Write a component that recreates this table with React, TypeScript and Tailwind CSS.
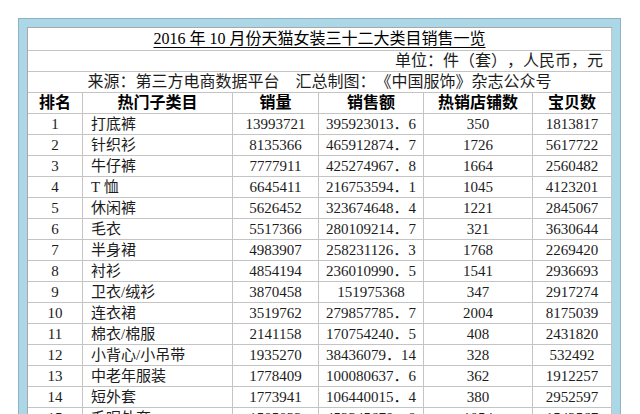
const rows: [string, string, string, string, string, string][] = [
  ["1", "打底裤", "13993721", "395923013．6", "350", "1813817"],
  ["2", "针织衫", "8135366", "465912874．7", "1726", "5617722"],
  ["3", "牛仔裤", "7777911", "425274967．8", "1664", "2560482"],
  ["4", "T 恤", "6645411", "216753594．1", "1045", "4123201"],
  ["5", "休闲裤", "5626452", "323674648．4", "1221", "2845067"],
  ["6", "毛衣", "5517366", "280109214．7", "321", "3630644"],
  ["7", "半身裙", "4983907", "258231126．3", "1768", "2269420"],
  ["8", "衬衫", "4854194", "236010990．5", "1541", "2936693"],
  ["9", "卫衣/绒衫", "3870458", "151975368", "347", "2917274"],
  ["10", "连衣裙", "3519762", "279857785．7", "2004", "8175039"],
  ["11", "棉衣/棉服", "2141158", "170754240．5", "408", "2431820"],
  ["12", "小背心/小吊带", "1935270", "38436079．14", "328", "532492"],
  ["13", "中老年服装", "1778409", "100080637．6", "362", "1912257"],
  ["14", "短外套", "1773941", "106440015．4", "380", "2952597"],
  ["15", "毛呢外套", "1585032", "452345678．9", "1054", "1542567"],
];

const headers = ["排名", "热门子类目", "销量", "销售额", "热销店铺数", "宝贝数"];

const cell = "flex items-center border-r border-b border-[#c4c4c4] leading-none";

export default function App() {
  return (
    <div className="w-[640px] h-[414px] overflow-hidden bg-white pt-[18px] pl-[18px] font-['Liberation_Serif','Noto_Sans_CJK_SC',serif] text-[#1c1c1c] [text-spacing-trim:space-all]">
      {/* window frame */}
      <div className="w-[603px] h-[420px] border-l border-t border-r border-[#8cb3c4] bg-[#acd7e7] pt-[8px] px-[8px]">
        <div className="w-[585px] h-full bg-white border-l border-t border-[#a8a8a8]">
          {/* title */}
          <div className="h-[23px] border-r border-b border-[#c4c4c4] flex items-center justify-center text-[16px] leading-none text-black">
            <span className="underline decoration-1 underline-offset-[3px]">2016 年 10 月份天猫女装三十二大类目销售一览</span>
          </div>
          <div className="h-[21px] border-r border-b border-[#c4c4c4] flex items-center justify-end pr-[8px] text-[16px] leading-none">
            单位：件（套），人民币，元
          </div>
          <div className="h-[21px] border-r border-b border-[#c4c4c4] flex items-center justify-center text-[16px] leading-none">
            来源：第三方电商数据平台　汇总制图：《中国服饰》杂志公众号
          </div>

          <div className="grid grid-cols-[55px_150px_86px_105px_109px_79px] auto-rows-[21px]">
            {headers.map((h) => (
              <div key={h} className={`${cell} justify-center text-[16px] font-bold text-black`}>
                {h}
              </div>
            ))}
            {rows.map((r) => (
              <div key={r[0]} className="contents text-[15px]">
                <div className={`${cell} justify-center`}>{r[0]}</div>
                <div className={`${cell} justify-start pl-[8px]`}>{r[1]}</div>
                <div className={`${cell} justify-center`}>{r[2]}</div>
                <div className={`${cell} justify-center`}>{r[3]}</div>
                <div className={`${cell} justify-center`}>{r[4]}</div>
                <div className={`${cell} justify-center`}>{r[5]}</div>
              </div>
            ))}
          </div>
        </div>
      </div>
    </div>
  );
}
